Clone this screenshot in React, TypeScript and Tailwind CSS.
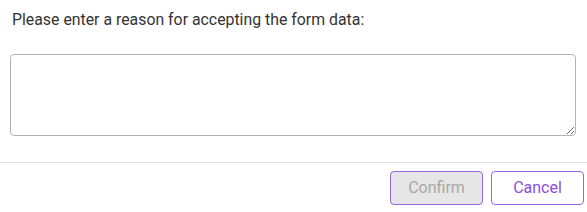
import React from "react"

export default function App() {
  return (
    <div className="w-[587px] h-[212px] bg-white font-['Roboto',sans-serif] text-[#333333]">
      <div className="pl-3 pt-[10px] text-[15.85px] leading-5">
        Please enter a reason for accepting the form data:
      </div>
      <div className="pl-[10px] pt-[24px]">
        <textarea className="block w-[566px] h-[82px] rounded-[4px] border border-[#b3b3b3] bg-white outline-none" />
      </div>
      <div className="mt-[26px] h-px bg-[#e2e2e2]" />
      <div className="flex justify-end gap-2 pr-[3px] pt-2">
        <button
          disabled
          className="w-[93px] h-[34px] rounded-[4px] border border-[#9466e0] bg-[#e6e6e6] text-[16px] text-[#a6a6a6]"
        >
          Confirm
        </button>
        <button className="w-[93px] h-[34px] rounded-[4px] border border-[#9466e0] bg-white text-[16px] text-[#8a4fe0]">
          Cancel
        </button>
      </div>
    </div>
  )
}
